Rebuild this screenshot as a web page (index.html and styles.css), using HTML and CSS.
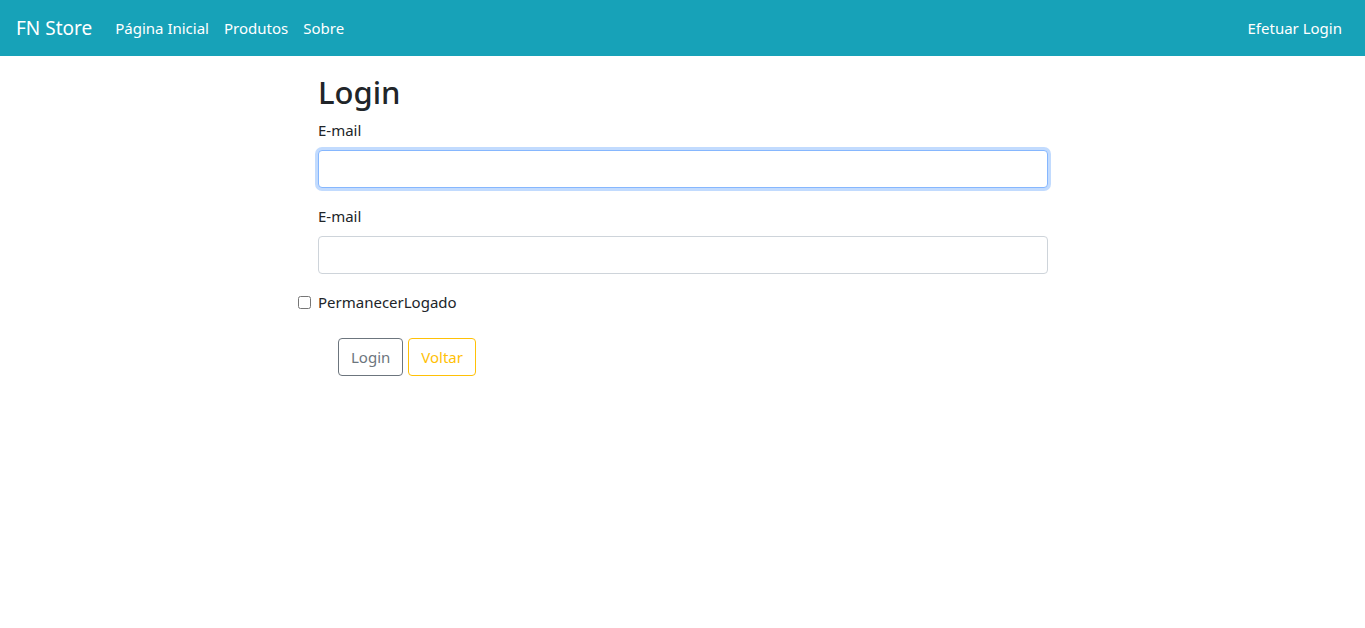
FILE: index.html
```html
<!DOCTYPE html>
<html lang="pt-BR">
<head>
<meta charset="utf-8">
<title>Login - FN Store</title>
<link rel="stylesheet" href="styles.css">
</head>
<body>
<nav class="navbar">
  <div class="nav-left">
    <a class="brand" href="#">FN Store</a>
    <ul class="nav-links">
      <li><a href="#">Página Inicial</a></li>
      <li><a href="#">Produtos</a></li>
      <li><a href="#">Sobre</a></li>
    </ul>
  </div>
  <a class="nav-login" href="#">Efetuar Login</a>
</nav>
<main class="content">
  <h2 class="title">Login</h2>
  <form class="form">
    <div class="field">
      <label class="label">E-mail</label>
      <input class="input focused" type="email">
    </div>
    <div class="field">
      <label class="label">E-mail</label>
      <input class="input" type="password">
    </div>
    <div class="check">
      <input class="check-box" type="checkbox">
      <label class="check-label">PermanecerLogado</label>
    </div>
    <div class="actions">
      <button class="btn btn-secondary" type="button">Login</button>
      <button class="btn btn-warning" type="button">Voltar</button>
    </div>
  </form>
</main>
</body>
</html>
```
FILE: styles.css
```css
* { box-sizing: border-box; }
html, body { margin: 0; padding: 0; }
body {
  font-family: "Noto Sans", "Open Sans", sans-serif;
  font-size: 15px;
  line-height: 24px;
  color: #212529;
  background: #fff;
}
a { text-decoration: none; }
.navbar {
  height: 56px;
  background: #17a2b8;
  display: flex;
  align-items: center;
  justify-content: space-between;
  padding: 0 15px 0 16px;
}
.nav-left { display: flex; align-items: center; }
.brand {
  color: #fff;
  font-size: 19px;
  margin-right: 15px;
  line-height: 30px;
}
.nav-links {
  list-style: none;
  margin: 0;
  padding: 0;
  display: flex;
}
.nav-links a, .nav-login {
  color: #fff;
  display: block;
  padding: 8px 8px 8px 8px;
}
.nav-links li + li a { padding-left: 7px; }
.content {
  width: 730px;
  margin-left: 318px;
  padding-top: 17px;
}
.title {
  font-size: 31px;
  font-weight: 500;
  line-height: 38px;
  margin: 0 0 7px;
}
.form { margin: 0; }
.field { margin-bottom: 16px; }
.label {
  display: block;
  margin-bottom: 8px;
}
.input {
  display: block;
  width: 100%;
  height: 38px;
  border: 1px solid #ced4da;
  border-radius: 4px;
  padding: 6px 12px;
  font: inherit;
  background: #fff;
  outline: none;
}
.input.focused {
  border-color: #86b7fe;
  box-shadow: 0 0 0 3px rgba(13, 110, 253, 0.25);
}
.check {
  display: flex;
  align-items: center;
  margin-left: -20px;
  margin-bottom: 24px;
}
.check-box {
  width: 13px;
  height: 13px;
  margin: 0 7px 0 0;
}
.actions {
  display: flex;
  gap: 5px;
  margin-left: 20px;
}
.btn {
  font: inherit;
  background: transparent;
  border: 1px solid;
  border-radius: 4px;
  padding: 6px 12px;
  line-height: 24px;
  cursor: pointer;
}
.btn-secondary { color: #6c757d; border-color: #6c757d; }
.btn-warning { color: #ffc107; border-color: #ffc107; }
```
